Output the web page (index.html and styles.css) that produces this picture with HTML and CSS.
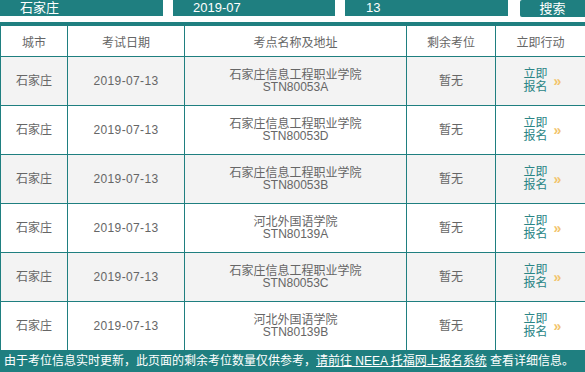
FILE: index.html
```html
<!DOCTYPE html>
<html lang="zh-CN">
<head>
<meta charset="utf-8">
<title>考位查询</title>
<link rel="stylesheet" href="styles.css">
</head>
<body>
<div class="filters">
  <div class="field field-city">石家庄</div>
  <div class="field field-month">2019-07</div>
  <div class="field field-day">13</div>
  <div class="search-btn">搜索</div>
</div>
<table class="seats">
  <colgroup>
    <col class="c-city"><col class="c-date"><col class="c-site"><col class="c-seat"><col class="c-act">
  </colgroup>
  <thead>
    <tr><th>城市</th><th>考试日期</th><th>考点名称及地址</th><th>剩余考位</th><th>立即行动</th></tr>
  </thead>
  <tbody>
    <tr class="alt"><td>石家庄</td><td class="num">2019-07-13</td><td class="site">石家庄信息工程职业学院<br>STN80053A</td><td>暂无</td><td><a class="act"><span class="act-text">立即<br>报名</span><span class="arrow">»</span></a></td></tr>
    <tr><td>石家庄</td><td class="num">2019-07-13</td><td class="site">石家庄信息工程职业学院<br>STN80053D</td><td>暂无</td><td><a class="act"><span class="act-text">立即<br>报名</span><span class="arrow">»</span></a></td></tr>
    <tr class="alt"><td>石家庄</td><td class="num">2019-07-13</td><td class="site">石家庄信息工程职业学院<br>STN80053B</td><td>暂无</td><td><a class="act"><span class="act-text">立即<br>报名</span><span class="arrow">»</span></a></td></tr>
    <tr><td>石家庄</td><td class="num">2019-07-13</td><td class="site">河北外国语学院<br>STN80139A</td><td>暂无</td><td><a class="act"><span class="act-text">立即<br>报名</span><span class="arrow">»</span></a></td></tr>
    <tr class="alt"><td>石家庄</td><td class="num">2019-07-13</td><td class="site">石家庄信息工程职业学院<br>STN80053C</td><td>暂无</td><td><a class="act"><span class="act-text">立即<br>报名</span><span class="arrow">»</span></a></td></tr>
    <tr><td>石家庄</td><td class="num">2019-07-13</td><td class="site">河北外国语学院<br>STN80139B</td><td>暂无</td><td><a class="act"><span class="act-text">立即<br>报名</span><span class="arrow">»</span></a></td></tr>
  </tbody>
</table>
<div class="notice">由于考位信息实时更新，此页面的剩余考位数量仅供参考，<a class="notice-link">请前往 NEEA 托福网上报名系统</a> 查看详细信息。</div>
</body>
</html>
```
FILE: styles.css
```css
html, body {
  margin: 0;
  padding: 0;
  background: #ffffff;
}
body {
  width: 585px;
  height: 372px;
  overflow: hidden;
  font-family: "Liberation Sans", "Noto Sans CJK SC", sans-serif;
  font-size: 12px;
  color: #666666;
}
.filters {
  display: flex;
  height: 16px;
  margin-bottom: 6px;
}
.field {
  background: #1f7f80;
  color: #ffffff;
  font-size: 13px;
  line-height: 16px;
  padding-left: 20px;
  box-sizing: border-box;
}
.field-city { width: 163px; }
.field-month { width: 162px; margin-left: 10px; }
.field-day { width: 163px; margin-left: 10px; padding-left: 21px; }
.search-btn {
  width: 65px;
  height: 17px;
  margin-left: 12px;
  background: #1f7f80;
  color: #ffffff;
  font-size: 13px;
  line-height: 17px;
  text-align: center;
  border-radius: 2px 0 0 2px;
}
.seats {
  width: 585px;
  border-collapse: collapse;
  table-layout: fixed;
  border-top: 4px solid #1f7f80;
}
.c-city { width: 67px; }
.c-date { width: 117px; }
.c-site { width: 222px; }
.c-seat { width: 89px; }
.c-act { width: 90px; }
.seats th, .seats td {
  border: 1px solid #1f7f80;
  padding: 0;
  text-align: center;
  vertical-align: middle;
  font-weight: normal;
  color: #666666;
}
.seats th {
  height: 30px;
  background: #ffffff;
}
.seats td {
  height: 48px;
  line-height: 12px;
  background: #ffffff;
}
.seats tr.alt td {
  background: #f3f3f3;
}
.seats td.num {
  letter-spacing: 0.35px;
}
.seats td.site {
  line-height: 12px;
}
.act {
  display: inline-flex;
  align-items: center;
  gap: 6px;
  padding-left: 4px;
  color: #2a8586;
  line-height: 13px;
  text-align: left;
}
.act-text {
  display: block;
}
.arrow {
  color: #f2c46c;
  font-size: 14px;
  font-weight: bold;
  line-height: 13px;
}
.notice {
  position: fixed;
  left: 0;
  bottom: 0;
  width: 585px;
  height: 21px;
  box-sizing: border-box;
  padding-left: 4px;
  background: #1f7f80;
  color: #ffffff;
  font-size: 12px;
  line-height: 21px;
  white-space: nowrap;
}
.notice-link {
  color: #ffffff;
  text-decoration: underline;
}
```
